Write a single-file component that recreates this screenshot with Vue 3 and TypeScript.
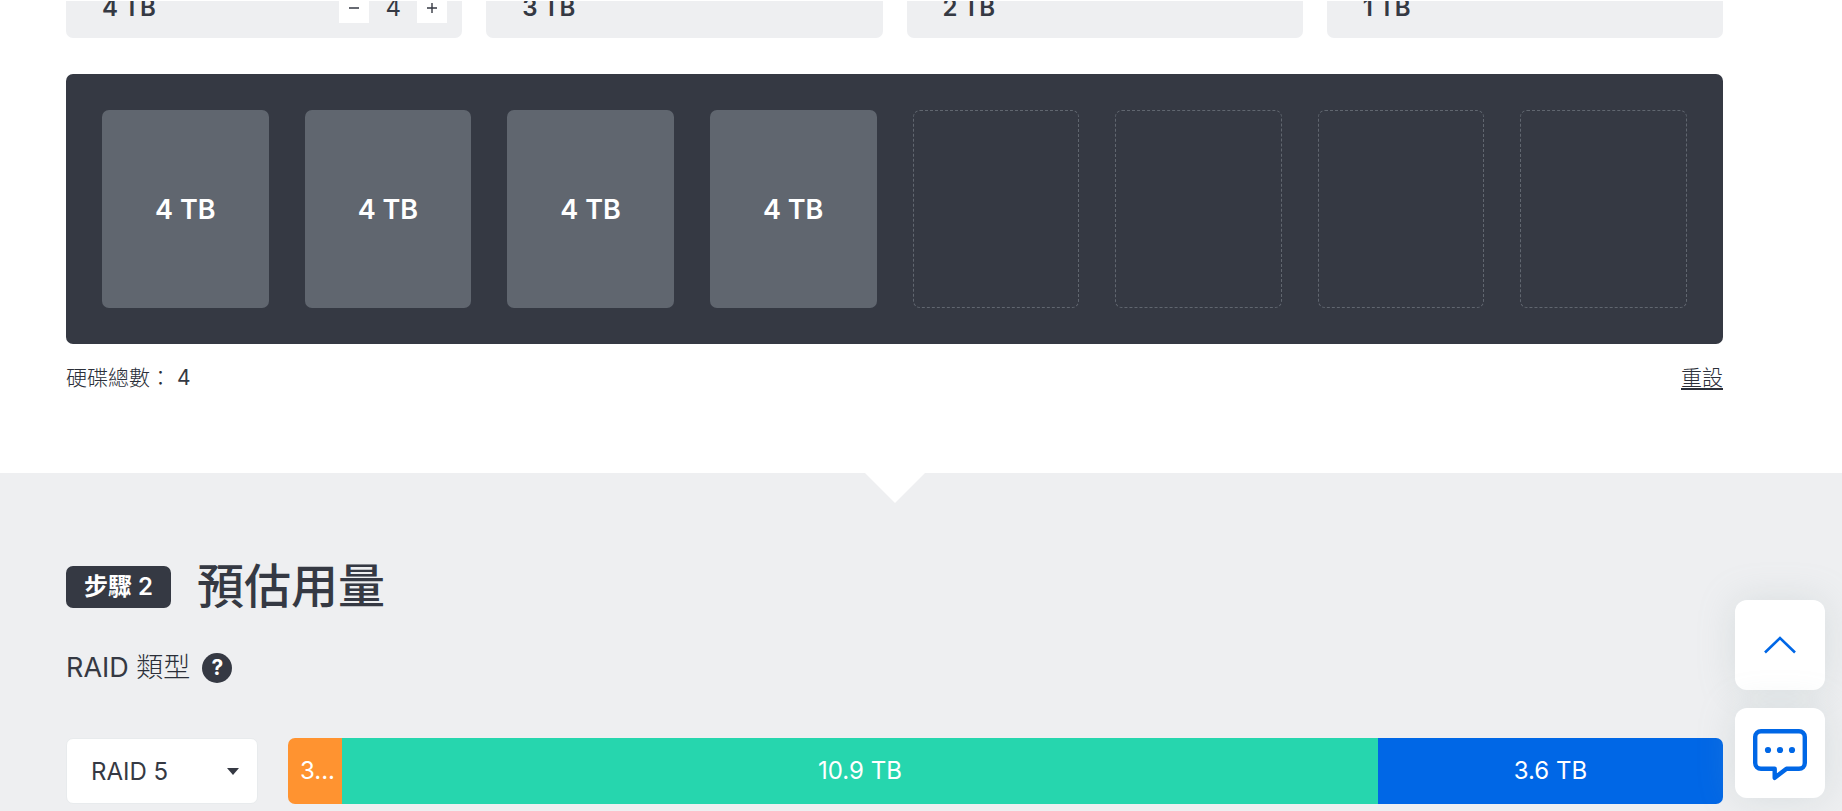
<script setup lang="ts">
import { computed, ref } from 'vue'

interface Drive {
  size: number
  count: number
}

interface Segment {
  kind: string
  label: string
  share: number
}

const bayCount = 8
const drives = ref<Drive[]>([
  { size: 4, count: 4 },
  { size: 3, count: 0 },
  { size: 2, count: 0 },
  { size: 1, count: 0 },
])
const raid = ref('RAID 5')

const installed = computed<number[]>(() =>
  drives.value.flatMap((d) => Array<number>(d.count).fill(d.size)),
)
const bays = computed<(number | null)[]>(() =>
  Array.from({ length: bayCount }, (_, i) => installed.value[i] ?? null),
)

const segments: Segment[] = [
  { kind: 'reserved', label: '3...', share: 54 },
  { kind: 'available', label: '10.9 TB', share: 1036 },
  { kind: 'protection', label: '3.6 TB', share: 345 },
]

function change(drive: Drive, step: number) {
  if (step > 0 && installed.value.length >= bayCount) return
  drive.count = Math.max(0, drive.count + step)
}

function reset() {
  drives.value.forEach((d) => (d.count = 0))
}

function toTop() {
  window.scrollTo({ top: 0, behavior: 'smooth' })
}
</script>

<template>
  <div class="page">
    <section class="drives">
      <div class="cards">
        <div v-for="drive in drives" :key="drive.size" class="card">
          <span class="card-name">{{ drive.size }} TB</span>
          <div v-if="drive.count" class="stepper">
            <button type="button" aria-label="−" @click="change(drive, -1)">
              <svg viewBox="0 0 12 12" width="12" height="12"><path d="M1 6h10" /></svg>
            </button>
            <span class="count">{{ drive.count }}</span>
            <button type="button" aria-label="+" @click="change(drive, 1)">
              <svg viewBox="0 0 12 12" width="12" height="12"><path d="M1 6h10M6 1v10" /></svg>
            </button>
          </div>
        </div>
      </div>

      <div class="enclosure">
        <div v-for="(bay, i) in bays" :key="i" class="bay" :class="{ filled: bay !== null }">
          <template v-if="bay !== null">{{ bay }} TB</template>
        </div>
      </div>

      <div class="summary">
        <span><span class="light">硬碟總數：</span> {{ installed.length }}</span>
        <button type="button" class="reset light" @click="reset">重設</button>
      </div>
    </section>

    <section class="estimate">
      <header class="heading">
        <span class="badge">步驟 2</span>
        <h2>預估用量</h2>
      </header>

      <div class="raid-label">
        <label for="raid">RAID <span class="light">類型</span></label>
        <button type="button" class="help" aria-label="?">?</button>
      </div>

      <div class="usage">
        <div class="select">
          <select id="raid" v-model="raid">
            <option>RAID 5</option>
          </select>
          <svg class="caret" viewBox="0 0 12 7" width="12" height="7"><path d="M0 0h12L6 7z" /></svg>
        </div>
        <div class="bar">
          <div
            v-for="s in segments"
            :key="s.kind"
            class="segment"
            :class="s.kind"
            :style="{ flexGrow: s.share }"
          >
            {{ s.label }}
          </div>
        </div>
      </div>
    </section>

    <aside class="floating">
      <button type="button" aria-label="↑" @click="toTop">
        <svg viewBox="0 0 32 18" width="32" height="18">
          <path d="M1 16.5 16 2l15 14.500" fill="none" stroke="currentColor" stroke-width="2.6" />
        </svg>
      </button>
      <button type="button" aria-label="…">
        <svg viewBox="0 0 54 48" width="54" height="48">
          <path
            d="M8 2.2h38a5.800 5.800 0 0 1 5.800 5.800v26a5.800 5.800 0 0 1-5.800 5.800H33.500L21.700 48.800V39.800H8A5.800 5.800 0 0 1 2.200 34V8A5.800 5.800 0 0 1 8 2.200z"
            fill="none"
            stroke="currentColor"
            stroke-width="4.4"
            stroke-linejoin="round"
          />
          <g fill="currentColor">
            <circle cx="15" cy="21" r="3.1" />
            <circle cx="27" cy="21" r="3.1" />
            <circle cx="39" cy="21" r="3.1" />
          </g>
        </svg>
      </button>
    </aside>
  </div>
</template>

<style>
body {
  margin: 0;
  background: #fff;
}
</style>

<style scoped>
.page {
  display: flex;
  flex-direction: column;
  min-height: 100vh;
  color: #353943;
  font-family: Inter, 'Noto Sans CJK TC', sans-serif;
  font-size: 21px;
}
.page *,
.page *::before {
  box-sizing: border-box;
}
button,
select {
  margin: 0;
  padding: 0;
  border: 0;
  background: none;
  color: inherit;
  font: inherit;
  cursor: pointer;
}
.page .light {
  color: #2b2f39;
  font-weight: 300;
}
.drives,
.estimate {
  padding: 0 119px 0 66px;
}
.drives {
  padding-top: 1px;
  padding-bottom: 79px;
}
.cards {
  display: grid;
  grid-template-columns: repeat(4, 1fr);
  gap: 24px;
}
.card {
  display: flex;
  align-items: flex-end;
  justify-content: space-between;
  height: 37px;
  padding: 0 15px 15px 36px;
  border-radius: 0 0 7px 7px;
  background: #eeeff1;
  overflow: hidden;
}
.card-name {
  font-size: 24px;
  font-weight: 600;
  line-height: 30px;
}
.stepper {
  display: flex;
  line-height: 30px;
}
.stepper button {
  display: flex;
  align-items: center;
  justify-content: center;
  width: 30px;
  height: 30px;
  background: #fff;
}
.stepper path {
  fill: none;
  stroke: #353943;
  stroke-width: 1.4;
}
.count {
  width: 48px;
  font-size: 24px;
  text-align: center;
}
.enclosure {
  display: grid;
  grid-template-columns: repeat(8, 1fr);
  gap: 36px;
  margin-top: 36px;
  padding: 36px;
  border-radius: 7px;
  background: #353943;
}
.bay {
  display: flex;
  align-items: center;
  justify-content: center;
  height: 198px;
  border: 1px dashed #60666f;
  border-radius: 7px;
  color: #fff;
  font-size: 27px;
  font-weight: 600;
}
.bay.filled {
  border: 0;
  background: #60666f;
}
.summary {
  display: flex;
  justify-content: space-between;
  margin-top: 18px;
  line-height: 32px;
}
.reset {
  text-decoration: underline;
  text-decoration-thickness: 2px;
  text-underline-offset: 3px;
}
.estimate {
  position: relative;
  flex: 1;
  padding-top: 79px;
  padding-bottom: 7px;
  background: #eeeff1;
}
.estimate::before {
  content: '';
  position: absolute;
  top: 0;
  left: calc(50% - 56px);
  width: 60px;
  height: 30px;
  background: #fff;
  clip-path: polygon(0 0, 100% 0, 50% 100%);
}
.heading {
  display: flex;
  align-items: center;
  gap: 26px;
  height: 70px;
}
.badge {
  padding: 0 18px;
  border-radius: 7px;
  background: #353943;
  color: #fff;
  font-size: 24px;
  font-weight: 600;
  line-height: 42px;
}
h2 {
  height: 70px;
  margin: 0;
  font-size: 47px;
  font-weight: 500;
  line-height: 68px;
}
.raid-label {
  display: flex;
  align-items: center;
  gap: 12px;
  margin-top: 26px;
  height: 40px;
  font-size: 27px;
  font-weight: 400;
}
.raid-label label {
  line-height: 40px;
}
.help {
  width: 30px;
  height: 30px;
  border-radius: 50%;
  background: #353943;
  color: #fff;
  font-size: 21px;
  font-weight: 700;
  line-height: 30px;
  text-align: center;
}
.usage {
  display: flex;
  gap: 30px;
  height: 66px;
  margin-top: 50px;
  font-size: 24px;
}
.select {
  position: relative;
  flex: none;
  width: 192px;
}
.select select {
  width: 100%;
  height: 66px;
  padding: 0 24px;
  border: 1px solid #e8ebed;
  border-radius: 7px;
  background: #fff;
  appearance: none;
}
.caret {
  position: absolute;
  top: 30px;
  right: 19px;
  fill: #353943;
  pointer-events: none;
}
.bar {
  display: flex;
  flex: 1;
  border-radius: 7px;
  overflow: hidden;
}
.segment {
  flex: 0 0 0;
  overflow: hidden;
  color: #fff;
  line-height: 66px;
  text-align: center;
  white-space: nowrap;
}
.reserved {
  text-indent: 5px;
  background: #ff9330;
}
.available {
  background: #26d6ae;
}
.protection {
  background: #0067e6;
}
.floating {
  position: fixed;
  right: 17px;
  bottom: 13px;
  display: flex;
  flex-direction: column;
  gap: 18px;
}
.floating button {
  display: flex;
  align-items: center;
  justify-content: center;
  width: 90px;
  height: 90px;
  border-radius: 12px;
  background: #fff;
  box-shadow: 0 0 36px rgba(150, 170, 170, 0.25);
  color: #0067e6;
}
.floating svg {
  overflow: visible;
}
</style>
